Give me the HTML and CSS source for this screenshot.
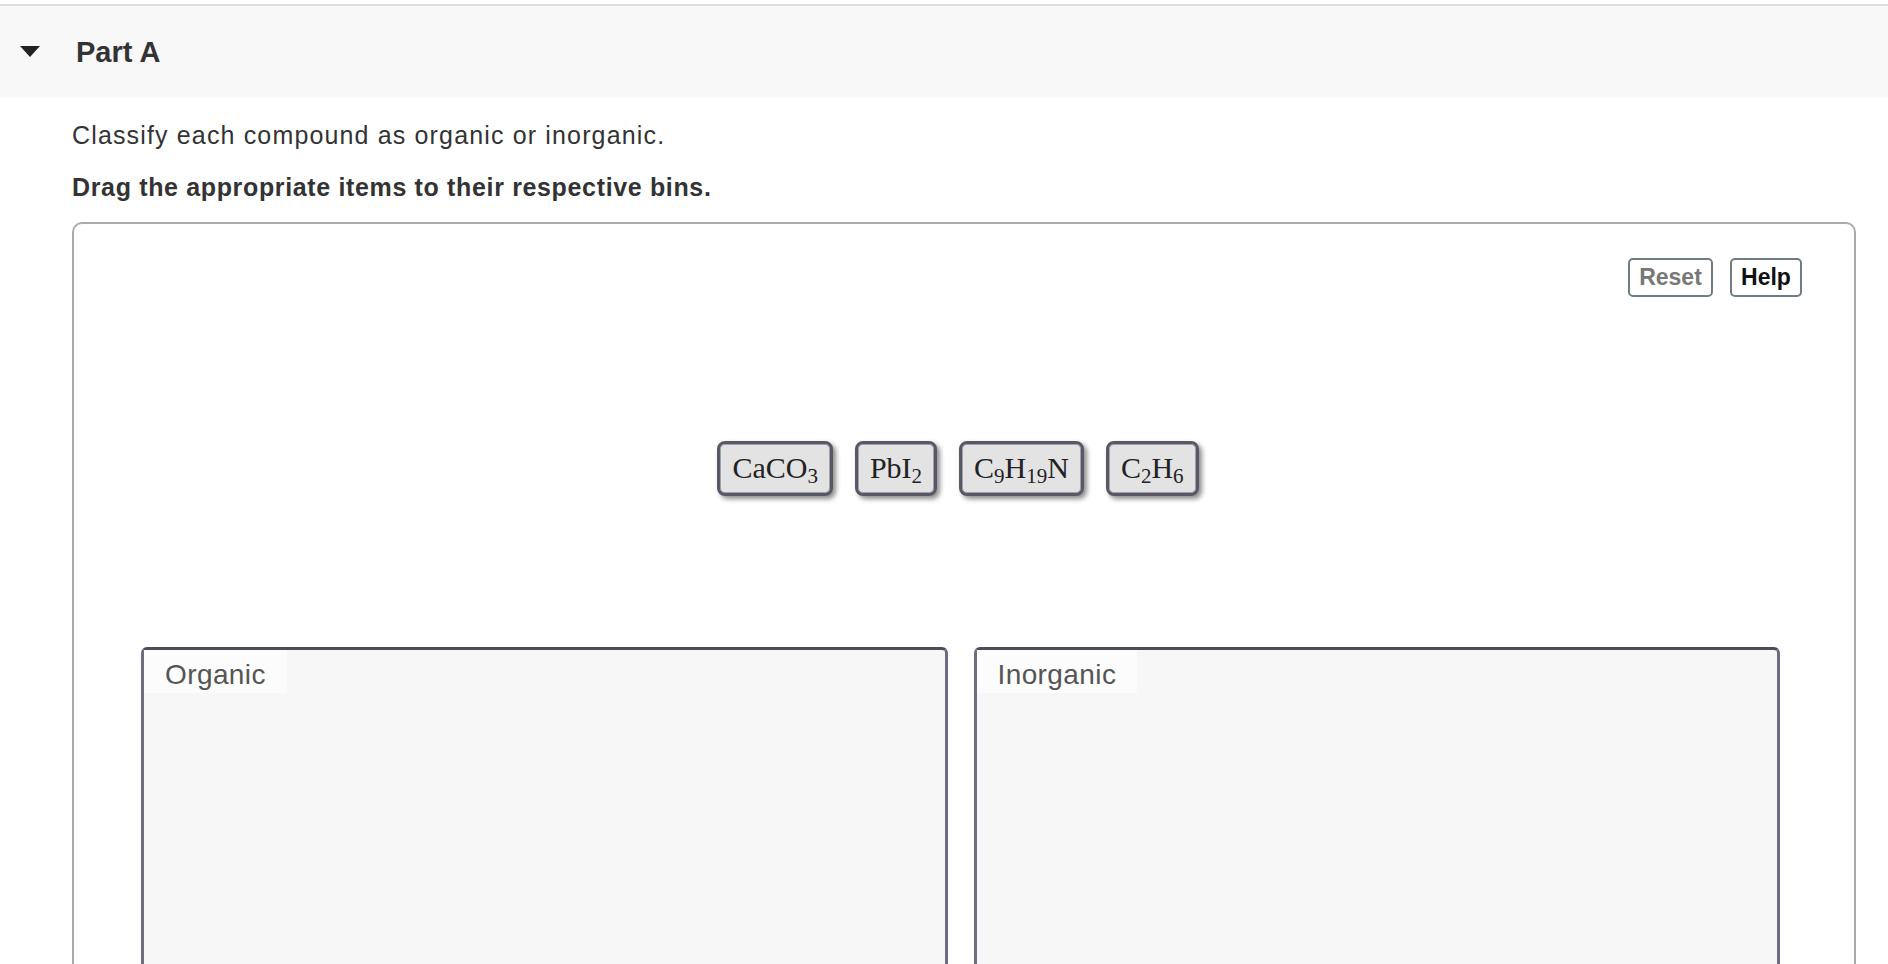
FILE: index.html
```html
<!DOCTYPE html>
<html lang="en">
<head>
<meta charset="utf-8">
<title>Part A</title>
<link rel="stylesheet" href="styles.css">
</head>
<body>
<div class="page">
  <div class="part-header">
    <span class="caret"></span>
    <h2 class="part-title">Part A</h2>
  </div>
  <div class="part-body">
    <p class="prompt">Classify each compound as organic or inorganic.</p>
    <p class="instruction">Drag the appropriate items to their respective bins.</p>
    <div class="dnd-box">
      <div class="toolbar">
        <button class="btn btn-reset">Reset</button>
        <button class="btn btn-help">Help</button>
      </div>
      <div class="chips">
        <div class="chip">CaCO<sub>3</sub></div>
        <div class="chip">PbI<sub>2</sub></div>
        <div class="chip">C<sub>9</sub>H<sub>19</sub>N</div>
        <div class="chip">C<sub>2</sub>H<sub>6</sub></div>
      </div>
      <div class="bins">
        <div class="bin"><div class="bin-label">Organic</div></div>
        <div class="bin"><div class="bin-label">Inorganic</div></div>
      </div>
    </div>
  </div>
</div>
</body>
</html>
```
FILE: styles.css
```css
html, body {
  margin: 0;
  padding: 0;
  background: #ffffff;
  height: 964px;
  overflow: hidden;
}
body {
  font-family: "Liberation Sans", Arial, sans-serif;
  color: #333333;
}
.page {
  padding-top: 4px;
}
.part-header {
  display: flex;
  align-items: center;
  height: 91px;
  background: #f8f8f8;
  border-top: 2px solid #dedede;
  padding-left: 20px;
}
.caret {
  width: 0;
  height: 0;
  border-left: 10.5px solid transparent;
  border-right: 10.5px solid transparent;
  border-top: 11px solid #222222;
  margin-right: 36px;
}
.part-title {
  margin: 2px 0 0 0;
  font-size: 29px;
  font-weight: bold;
  color: #333333;
}
.part-body {
  padding: 0 32px 0 72px;
}
.prompt {
  margin: 23px 0 0 0;
  font-size: 25px;
  line-height: 30px;
  letter-spacing: 1.15px;
  color: #333333;
}
.instruction {
  margin: 22px 0 0 0;
  font-size: 25px;
  line-height: 30px;
  font-weight: bold;
  letter-spacing: 0.65px;
  color: #333333;
}
.dnd-box {
  margin-top: 20px;
  border: 2px solid #aaaaaa;
  border-radius: 10px;
  height: 900px;
  box-sizing: border-box;
}
.toolbar {
  display: flex;
  justify-content: flex-end;
  gap: 17px;
  padding: 34px 52px 0 0;
}
.btn {
  height: 39px;
  box-sizing: border-box;
  border: 2px solid #6f7d82;
  border-radius: 5px;
  background: #ffffff;
  font-family: "Liberation Sans", Arial, sans-serif;
  font-size: 23px;
  font-weight: bold;
  padding: 0 5px;
  line-height: 35px;
}
.btn-reset {
  color: #777777;
  width: 85px;
}
.btn-help {
  color: #111111;
  width: 72px;
}
.chips {
  display: flex;
  justify-content: center;
  gap: 22px;
  margin-top: 144px;
  padding-right: 12px;
}
.chip {
  height: 55px;
  box-sizing: border-box;
  padding: 0 12px;
  border: 3px solid #595966;
  border-radius: 8px;
  background: #e3e3e3;
  box-shadow: inset 0 0 0 1px #a0a0ac, 3px 3px 5px rgba(0, 0, 0, 0.45);
  font-family: "Liberation Serif", "Times New Roman", serif;
  font-size: 30px;
  line-height: 48px;
  color: #222222;
  white-space: nowrap;
}
.chip sub {
  font-size: 21px;
  line-height: 0;
  vertical-align: -5px;
}
.bins {
  display: grid;
  grid-template-columns: 1fr 1fr;
  gap: 26px;
  margin-top: 151px;
  padding: 0 74px 0 67px;
}
.bin {
  height: 420px;
  background: #f7f7f7;
  border: 3px solid #6e6e80;
  border-top-color: #4d4d55;
  border-radius: 6px;
}
.bin-label {
  display: inline-block;
  background: #fcfcfc;
  padding: 4px 21px 0 21px;
  height: 39px;
  line-height: 41px;
  font-size: 28px;
  letter-spacing: 0.4px;
  color: #555555;
}
```
